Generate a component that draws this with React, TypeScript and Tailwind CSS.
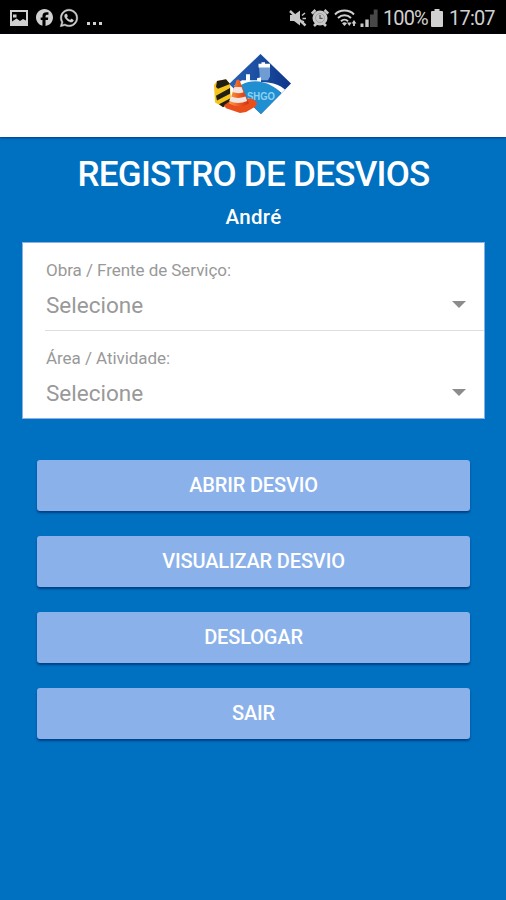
import { FaFacebook, FaWhatsapp } from "react-icons/fa6";

const fields = ["Obra / Frente de Serviço:", "Área / Atividade:"];

const actions = ["ABRIR DESVIO", "VISUALIZAR DESVIO", "DESLOGAR", "SAIR"];

function PictureIcon() {
  return (
    <svg width="18" height="16" viewBox="0 0 18 16" fill="none">
      <rect x="1" y="1" width="16" height="14" stroke="#d0d0d0" strokeWidth="2" />
      <path d="M2 11.5 6.5 8.5l3.5 2.5 3-2 3 1.500V14H2z" fill="#d0d0d0" />
      <path d="M3 4.500h3.500v3H3z" fill="#d0d0d0" />
    </svg>
  );
}

function MuteIcon() {
  return (
    <svg width="18" height="18" viewBox="0 0 18 18" fill="none">
      <path d="M1 6h4l6-4.500v15L5 12H1z" fill="#c8c8c8" />
      <path d="M13 6.500 16 4M13.500 9.500H17M13 12l2 1" stroke="#c8c8c8" strokeWidth="1.500" />
      <path d="M1 2 16.500 16.500" stroke="#c8c8c8" strokeWidth="2.400" />
    </svg>
  );
}

function AlarmIcon() {
  return (
    <svg width="18" height="18" viewBox="0 0 18 18" fill="none">
      <path d="M.8 4.500 4.500 1M17.200 4.500 13.500 1M3 17l2.500-2.500M15 17l-2.500-2.500" stroke="#c8c8c8" strokeWidth="2.600" />
      <circle cx="9" cy="9" r="7.500" fill="#c8c8c8" />
      <circle cx="9" cy="9" r="4.500" stroke="#999" strokeWidth="0.800" />
      <path d="M9 6v3.300h2.600" stroke="#555" strokeWidth="1.200" />
    </svg>
  );
}

function WifiIcon() {
  return (
    <svg width="24" height="18" viewBox="0 0 24 18" fill="none">
      <path d="M1 5.500C6 .3 15 .3 20 5.500M4 9c3.800-3.700 9.200-3.700 13 0M7 12.300c2-2 5-2 7 0" stroke="#d0d0d0" strokeWidth="2" />
      <path d="m10.500 17-2.500-2.800c1.500-1.200 3.500-1.200 5 0z" fill="#d0d0d0" />
      <path d="M13 13.500h4.600l-2.300 3.500zM17.600 14.600 20 11l2.400 3.600h-1.500V17h-1.800v-2.400z" fill="#d0d0d0" />
    </svg>
  );
}

function SignalIcon() {
  return (
    <svg width="18" height="18" viewBox="0 0 18 18">
      <path d="M.5 14.500h3V18h-3z" fill="#c8c8c8" />
      <path d="M5.300 10.500h3.400V18H5.300z" fill="#c8c8c8" />
      <path d="M10 5.500h3.700V18H10zM13.700.500h3.900V18h-3.900z" fill="#484848" />
    </svg>
  );
}

function BatteryIcon() {
  return (
    <svg width="12" height="18" viewBox="0 0 12 18" fill="#d0d0d0">
      <path d="M3.500 0h5v2H11a1 1 0 0 1 1 1v14a1 1 0 0 1-1 1H1a1 1 0 0 1-1-1V3a1 1 0 0 1 1-1h2.500z" />
    </svg>
  );
}

function Logo() {
  return (
    <svg width="80" height="62" viewBox="0 0 80 64" preserveAspectRatio="none">
      <defs>
        <clipPath id="diamond">
          <path d="M47.500 1 78 31.500 48 63 16 32z" />
        </clipPath>
        <linearGradient id="sky" x1="0" y1="0" x2="1" y2="0">
          <stop offset="0" stopColor="#2f6fbe" />
          <stop offset="1" stopColor="#0c3489" />
        </linearGradient>
        <linearGradient id="cone" x1="0" y1="0" x2="1" y2="0">
          <stop offset="0" stopColor="#f5a04a" />
          <stop offset="0.5" stopColor="#ef5a20" />
          <stop offset="1" stopColor="#c93410" />
        </linearGradient>
      </defs>
      <g clipPath="url(#diamond)">
        <path d="M0 0h80v64H0z" fill="url(#sky)" />
        {/* dam and towers */}
        <path d="M46 14h11v10l-2 4h-8z" fill="#6f9cd3" />
        <path d="M45.500 11h3V9.500h3.500V11h5v4H45.500zM33 22h4v6h7v-2l4-1v5c12 0 22 4 27 11l-3 3C61 34 47 29 29 35l-8-1 8-6h4z" fill="#fff" />
        <path d="M19 42c8-13 25-17 40-8 7 4 12 9 12 17L48 64 20 45z" fill="#208fd2" />
      </g>
      <text x="34" y="49" fill="#8ed2f2" fontSize="10.500" fontWeight="700" fontFamily="Liberation Sans, sans-serif" textLength="28" lengthAdjust="spacingAndGlyphs">
        SHGO
      </text>
      {/* striped barrier */}
      <path d="m1 33 3-4 9-2 4 5 1 17-7 7-9-5z" fill="#f4c51c" />
      <path d="m4 29 9-2 4 5-12 5-2-2zM3 44l14-8v6L4 49zM6 53l11-6v4l-7 5z" fill="#211e14" />
      {/* traffic cone */}
      <path d="m11 54 8-6 20-1 5 4-1 4-10 6-6 1-14-5z" fill="#e94e1b" />
      <path d="M23.500 28q1.500-1.500 3 0L36 52q-9 6-20 0z" fill="url(#cone)" />
      <path d="m21.500 35 7 .2 2 5.300q-5 2-11-.2zM18 45q7 3 14.500 0l1.700 4.500q-9 4-18 0z" fill="#f3e6e2" />
    </svg>
  );
}

function StatusBar() {
  return (
    <div className="flex h-[34px] items-center bg-black pt-px pr-[10px] pl-[10px] text-[#d0d0d0]">
      <PictureIcon />
      <FaFacebook className="ml-[8px] size-[17px]" />
      <FaWhatsapp className="ml-[6px] size-[20px] stroke-[#d0d0d0] stroke-[12px]" />
      <div className="mt-[12px] ml-[8px] flex gap-[3px]">
        <span className="size-[3px] bg-[#d0d0d0]" />
        <span className="size-[3px] bg-[#d0d0d0]" />
        <span className="size-[3px] bg-[#d0d0d0]" />
      </div>
      <div className="ml-auto flex items-center">
        <MuteIcon />
        <span className="ml-[4px]"><AlarmIcon /></span>
        <span className="ml-[5px]"><WifiIcon /></span>
        <span className="ml-[2px]"><SignalIcon /></span>
        <span className="ml-[5px] w-[45px] text-[20px] leading-[22px] tracking-[-0.9px] whitespace-nowrap">100%</span>
        <span className="ml-[3px]"><BatteryIcon /></span>
        <span className="ml-[6px] w-[47px] text-[20px] leading-[22px] tracking-[-0.8px] whitespace-nowrap">17:07</span>
      </div>
    </div>
  );
}

export default function App() {
  return (
    <div className="flex h-[900px] w-[506px] flex-col bg-[#0070c0] font-['Roboto',sans-serif]">
      <StatusBar />
      <header className="flex h-[103px] justify-center bg-white pt-[19px] shadow-[0_1px_2px_#003f85]">
        <Logo />
      </header>

      <main className="flex flex-col">
        <h1 className="mt-[17px] pl-px text-center text-[35px] leading-[42px] font-medium tracking-[-0.72px] text-white">
          REGISTRO DE DESVIOS
        </h1>
        <p className="mt-[8px] pl-px text-center text-[20.5px] leading-[26px] font-medium tracking-[0.3px] text-white">André</p>

        <section className="mr-[21px] ml-[22px] mt-[12px] h-[177px] border border-[#8caee8] bg-white pl-[22px] text-[#999]">
          {fields.map((label) => (
            <div key={label} className="h-[88px] border-b border-[#dedede] pt-[16px] last:border-b-0">
              <p className="pl-px text-[17px] leading-[22px] tracking-[-0.05px]">{label}</p>
              <div className="mt-[10px] flex items-center justify-between pr-[18px] pl-px text-[22.5px] leading-[28px]">
                <span>Selecione</span>
                <svg className="mb-px" width="14" height="7" viewBox="0 0 14 7">
                  <path d="M0 0h14L7 7z" fill="#8c8c8c" />
                </svg>
              </div>
            </div>
          ))}
        </section>

        <div className="mr-[36px] ml-[37px] mt-[41px] flex flex-col gap-[25px]">
          {actions.map((label) => (
            <button
              key={label}
              className="h-[51px] rounded-[3px] bg-[#8ab1ea] pb-[2px] text-[20px] font-medium tracking-[-0.15px] text-white shadow-[0_2px_2px_rgba(0,30,90,0.55)]"
            >
              {label}
            </button>
          ))}
        </div>
      </main>
    </div>
  );
}
